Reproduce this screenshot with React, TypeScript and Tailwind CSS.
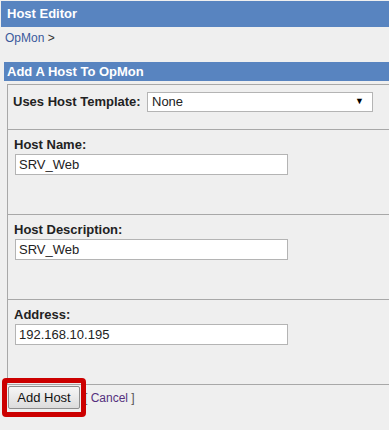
import React from "react";

const font = { fontFamily: '"Liberation Sans", Arial, sans-serif' };

function Field({ label, value }: { label: string; value: string }) {
  return (
    <div className="h-[85px] border-b border-[#a8a8a8] pl-[6px] pt-[7px]">
      <div className="h-[16px] text-[13px] font-bold leading-[16px] text-[#222]">{label}</div>
      <div className="mt-[1px] ml-[1px] flex h-[21px] w-[273px] items-center border border-[#b4b4b4] bg-white pl-[3px] text-[13px] text-[#222]">
        {value}
      </div>
    </div>
  );
}

export default function App() {
  return (
    <div className="relative h-[430px] w-[389px] overflow-hidden bg-[#efefef]" style={font}>
      <div className="ml-[1px] mt-[1px] flex h-[26px] items-center bg-[#5884c0] pl-[6px] text-[13px] font-bold text-white">
        Host Editor
      </div>
      <div className="pl-[5px] pt-[3px] text-[12px] leading-[16px] text-[#333]">
        <span className="text-[#3a5a9c]">OpMon</span> &gt;
      </div>
      <div className="ml-[4px] mt-[16px] flex h-[19px] items-center bg-[#5884c0] pl-[3px] text-[13px] font-bold text-white">
        Add A Host To OpMon
      </div>
      <div className="ml-[7px] mt-[3px] border-l border-t border-[#a8a8a8]">
        <div className="flex h-[45px] items-start border-b border-[#a8a8a8] pl-[5px] pt-[7px]">
          <div className="mt-[2px] w-[134px] text-[13px] font-bold leading-[16px] text-[#222]">Uses Host Template:</div>
          <div className="flex h-[20px] w-[226px] items-center justify-between border border-[#b4b4b4] bg-white pl-[4px] pr-[8px] text-[13px] text-[#222]">
            <span>None</span>
            <span className="text-[9px] text-black">▼</span>
          </div>
        </div>
        <Field label="Host Name:" value="SRV_Web" />
        <Field label="Host Description:" value="SRV_Web" />
        <Field label="Address:" value="192.168.10.195" />
      </div>
      <div className="ml-[8px] mt-[1px] flex items-center gap-[4px]">
        <div className="flex h-[23px] w-[72px] items-center justify-center rounded-[2px] border border-[#8e8e8e] bg-gradient-to-b from-[#f6f6f6] to-[#dcdcdc] text-[13px] text-[#111]">
          Add Host
        </div>
        <div className="text-[12px] text-[#555]">
          [ <span className="text-[#55307e]">Cancel</span> ]
        </div>
      </div>
      <div className="absolute left-[2px] top-[378px] h-[39px] w-[84px] rounded-[4px] border-[5px] border-[#cc0000]" />
    </div>
  );
}
